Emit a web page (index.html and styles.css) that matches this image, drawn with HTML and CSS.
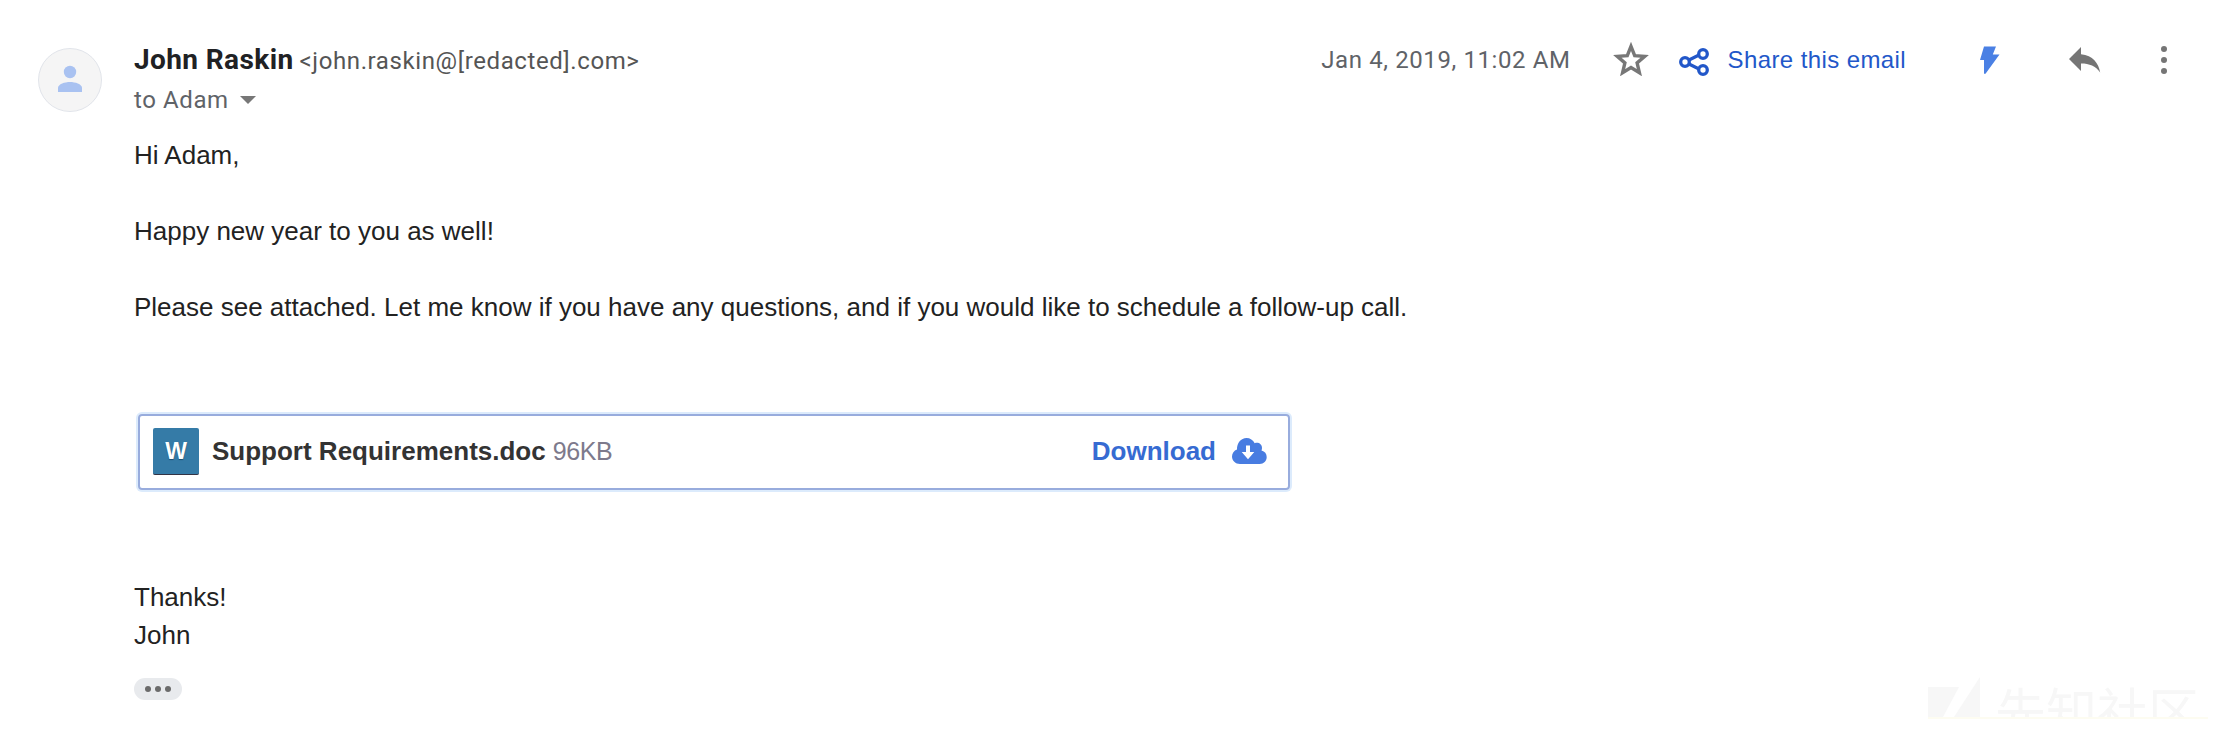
FILE: index.html
```html
<!DOCTYPE html>
<html lang="en">
<head>
<meta charset="utf-8">
<title>Email from John Raskin</title>
<link rel="stylesheet" href="styles.css">
</head>
<body>
<article class="message">
  <div class="avatar">
    <svg width="64" height="64" viewBox="0 0 64 64"><circle cx="32" cy="32" r="31.5" fill="#f5f5f5" stroke="#e1e4ea"/><circle cx="32" cy="24" r="6.2" fill="#a9c2f1"/><path d="M20 44v-4c0-4 7-6 12-6s12 2 12 6v4z" fill="#a9c2f1"/></svg>
  </div>
  <div class="content">
    <header class="head">
      <div class="sender"><span class="name">John Raskin</span><span class="address">&lt;john.raskin@[redacted].com&gt;</span></div>
      <div class="actions">
        <span class="date">Jan 4, 2019, 11:02 AM</span>
        <svg class="star" width="36" height="34" viewBox="0 0 36 34"><path d="M18 4.300l3.700 9.300 10 .8-7.600 6.500 2.300 9.800-8.400-5.200-8.400 5.200 2.300-9.800-7.600-6.500 10-.8z" fill="none" stroke="#777" stroke-width="3.400"/></svg>
        <svg class="share-icon" width="30" height="28" viewBox="0 0 30 28" fill="none" stroke="#2257c9" stroke-width="3.300"><path d="M10 12l10-5M10 16l10 5"/><circle cx="6" cy="14" r="4.300"/><circle cx="24" cy="6" r="4.300"/><circle cx="24" cy="22" r="4.300"/></svg>
        <span class="share">Share this email</span>
        <svg class="bolt" width="20" height="28" viewBox="0 0 20 28"><path d="M4 .5h12l-3.200 8H19.500L5.500 27.800H4V14H0z" fill="#4a80e4"/></svg>
        <svg class="reply" width="32" height="26" viewBox="0 0 32 26"><path d="M12 7.200V0L0 12l12 12v-7.500c8.500 0 14.500 2.500 19.200 9C29.500 16 24 8.500 12 7.200z" fill="#757575"/></svg>
        <svg class="more" width="6" height="28" viewBox="0 0 6 28" fill="#757575"><circle cx="3" cy="3" r="3"/><circle cx="3" cy="14" r="3"/><circle cx="3" cy="25" r="3"/></svg>
      </div>
    </header>
    <div class="recipient"><span>to Adam</span><svg width="16" height="8" viewBox="0 0 16 8"><path d="M0 0h16L8 8z" fill="#777"/></svg></div>
    <div class="body">
      <p>Hi Adam,</p>
      <p>Happy new year to you as well!</p>
      <p>Please see attached. Let me know if you have any questions, and if you would like to schedule a follow-up call.</p>
    </div>
    <div class="attachment">
      <span class="badge">W</span>
      <span class="file">Support Requirements.doc</span>
      <span class="size">96KB</span>
      <span class="download">Download</span>
      <svg class="cloud" width="35" height="26" viewBox="0 0 35 26"><path d="M8 26C3.500 26 0 22.700 0 18.500c0-3.300 2-6 5-7C4.800 5 9 0 14.500 0c3.600 0 6.500 2 8.200 5.200 3.900-1.200 7.300 1 7.300 4.800 0 1-.2 1.800-.5 2.500 3.300.8 5.200 3.300 5.200 6.500 0 4-3 7-7 7z" fill="#487ce1"/><path d="M14 7.500h4V14h4.300L16 21.300 9.700 14H14z" fill="#fff"/></svg>
    </div>
    <div class="signature"><p>Thanks!</p><p>John</p></div>
    <div class="trimmed"><i></i><i></i><i></i></div>
  </div>
</article>
<div class="watermark">
  <svg width="53" height="40" viewBox="0 0 53 40"><path d="M0 10h31L15 40H0zM52 0v40H26z" fill="#f7f7f7"/></svg>
  <span>先知社区</span>
</div>
</body>
</html>
```
FILE: styles.css
```css
* { box-sizing: border-box; }
body { margin: 0; height: 746px; overflow: hidden; background: #fff; position: relative; }
p { margin: 0; }
svg { display: block; flex: none; }
.message { display: flex; padding: 40px 51px 0 38px; font-family: Roboto, sans-serif; white-space: nowrap; }
.avatar { width: 64px; margin: 8px 32px 0 0; flex: none; }
.content { flex: 1; min-width: 0; }
.head { display: flex; justify-content: space-between; align-items: center; height: 40px; }
.sender { display: flex; align-items: baseline; }
.name { font-size: 28px; font-weight: 700; line-height: 40px; color: #202124; letter-spacing: .4px; }
.address { margin-left: 6px; font-size: 24px; color: #555; letter-spacing: .6px; }
.actions { display: flex; align-items: center; }
.date { font-size: 24px; line-height: 40px; color: #5f6368; letter-spacing: .6px; }
.star { margin: -2px 0 0 42px; }
.share-icon { margin: 3px 0 0 30px; }
.share { margin-left: 19px; font: 24px/40px "Liberation Sans", Arial, sans-serif; letter-spacing: .4px; color: #2257c9; }
.bolt { margin-left: 74px; }
.reply { margin-left: 69px; }
.more { margin-left: 60px; }
.recipient { display: flex; align-items: center; gap: 11px; height: 38px; margin-top: 1px; font-size: 24px; letter-spacing: .6px; color: #5f6368; }
.body, .signature { font: 26px/38px "Liberation Sans", Arial, sans-serif; color: #222; }
.body { display: grid; gap: 38px; margin-top: 17px; }
.body p, .signature p { width: max-content; }
.attachment { display: flex; align-items: center; width: 1152px; height: 76px; margin: 88px 0 0 4px; padding: 0 21px 2px 13px; border: 2px solid #98acdd; border-radius: 4px; box-shadow: 0 0 0 2px #dcebfc; font: 26px/38px "Liberation Sans", Arial, sans-serif; }
.badge { width: 46px; height: 47px; border-radius: 2px; border-bottom: 1px solid #334; background: #357ba7; color: #fff; font-weight: 700; font-size: 23px; line-height: 46px; text-align: center; text-shadow: 0 1px 1px #1f4f70; }
.file { margin-left: 13px; font-weight: 700; color: #333; }
.size { margin-left: 7px; font-size: 25px; letter-spacing: -.4px; color: #7d7a8c; }
.download { margin-left: auto; font-weight: 700; color: #366bd2; }
.cloud { margin-left: 16px; }
.signature { margin-top: 88px; }
.trimmed { display: flex; align-items: center; justify-content: center; gap: 4px; width: 48px; height: 22px; margin-top: 24px; border-radius: 11px; background: #e8eaed; }
.trimmed i { width: 6px; height: 6px; border-radius: 50%; background: #6b6b6b; }
.watermark { position: absolute; left: 1928px; top: 677px; height: 42px; width: 280px; display: flex; gap: 14px; overflow: hidden; border-bottom: 2px solid #fdfcf1; font: 51px/64px "Noto Sans CJK SC", sans-serif; color: #f7f7f7; white-space: nowrap; }
```
